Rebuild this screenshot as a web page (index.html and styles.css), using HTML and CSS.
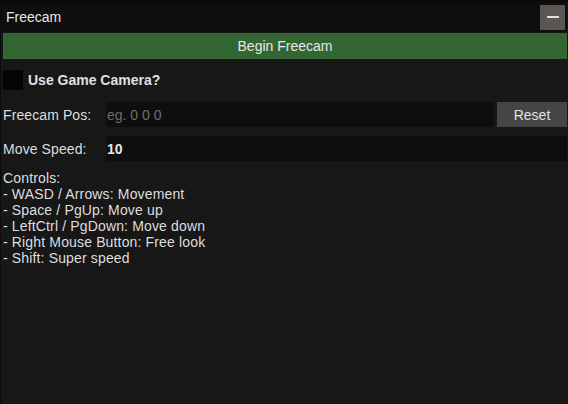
FILE: index.html
```html
<!DOCTYPE html>
<html lang="en">

<head>
  <meta http-equiv="Content-Type" content="text/html;charset=UTF-8" />
  <meta name="viewport" content="width=device-width, initial-scale=1.0" />
  <title>Freecam</title>
  <link rel="stylesheet" href="styles.css">
</head>

<body>
  <div class="window">
    <header class="titlebar">
      <span class="title">Freecam</span>
      <button class="minimize" type="button" aria-label="Minimize"><span></span></button>
    </header>

    <button class="begin" type="button">Begin Freecam</button>

    <div class="check-row">
      <input id="useGameCam" type="checkbox" />
      <label for="useGameCam">Use Game Camera?</label>
    </div>

    <div class="field-row">
      <label for="camPos">Freecam Pos:</label>
      <input id="camPos" type="text" placeholder="eg. 0 0 0" />
      <button class="reset" type="button">Reset</button>
    </div>

    <div class="field-row">
      <label for="moveSpeed">Move Speed:</label>
      <input id="moveSpeed" class="bold" type="text" value="10" />
    </div>

    <div class="controls">
      Controls:<br>
      - WASD / Arrows: Movement<br>
      - Space / PgUp: Move up<br>
      - LeftCtrl / PgDown: Move down<br>
      - Right Mouse Button: Free look<br>
      - Shift: Super speed
    </div>
  </div>
</body>

</html>
```

FILE: styles.css
```css
* {
  font-family: "Liberation Sans", Arial, sans-serif;
  box-sizing: border-box;
}

body {
  margin: 0;
  padding: 0;
  background-color: #171717;
  color: #dedede;
  font-size: 14px;
}

.window {
  height: 404px;
  background-color: #171717;
  border-left: 1px solid #0a0a0a;
  border-top: 2px solid #0a0a0a;
  padding-right: 1px;
}

/* Title bar */
.titlebar {
  display: flex;
  align-items: center;
  justify-content: space-between;
  height: 30px;
  padding: 0 2px 0 5px;
  background-color: #0e0e0e;
}

.title {
  color: #e6e6e6;
  font-size: 14px;
}

.minimize {
  width: 25px;
  height: 25px;
  padding: 0;
  border: none;
  background-color: #5a5651;
  display: flex;
  align-items: center;
  justify-content: center;
}

.minimize span {
  display: block;
  width: 12px;
  height: 2px;
  background-color: #e0e0e0;
}

.begin {
  display: block;
  width: calc(100% - 2px);
  height: 26px;
  margin: 1px 0 0 2px;
  border: none;
  padding: 0;
  background-color: #336633;
  color: #e8e8e8;
  font-size: 14px;
}

/* Rows */
.check-row {
  display: flex;
  align-items: center;
  gap: 5px;
  height: 20px;
  margin-top: 11px;
  padding-left: 2px;
}

.check-row input {
  appearance: none;
  width: 20px;
  height: 20px;
  margin: 0;
  background-color: #050505;
}

.check-row label {
  font-weight: bold;
  color: #e0e0e0;
}

.field-row {
  display: flex;
  align-items: stretch;
  height: 25px;
  margin-top: 12px;
  padding-left: 2px;
}

.field-row + .field-row {
  margin-top: 9px;
}

.field-row label {
  width: 103px;
  flex-shrink: 0;
  display: flex;
  align-items: center;
  letter-spacing: 0.1px;
}

.field-row input {
  flex: 1;
  min-width: 0;
  margin: 0;
  padding: 0 1px;
  border: none;
  outline: none;
  background-color: #0e0e0e;
  color: #e6e6e6;
  font-size: 14px;
}

.field-row input::placeholder {
  color: #6e6e6e;
}

.field-row input.bold {
  font-weight: bold;
}

.reset {
  width: 70px;
  margin-left: 3px;
  padding: 0;
  border: none;
  background-color: #454545;
  color: #e2e2e2;
  font-size: 14px;
}

.controls {
  margin-top: 9px;
  padding-left: 2px;
  line-height: 16px;
  letter-spacing: 0.15px;
  color: #dedede;
}
```
